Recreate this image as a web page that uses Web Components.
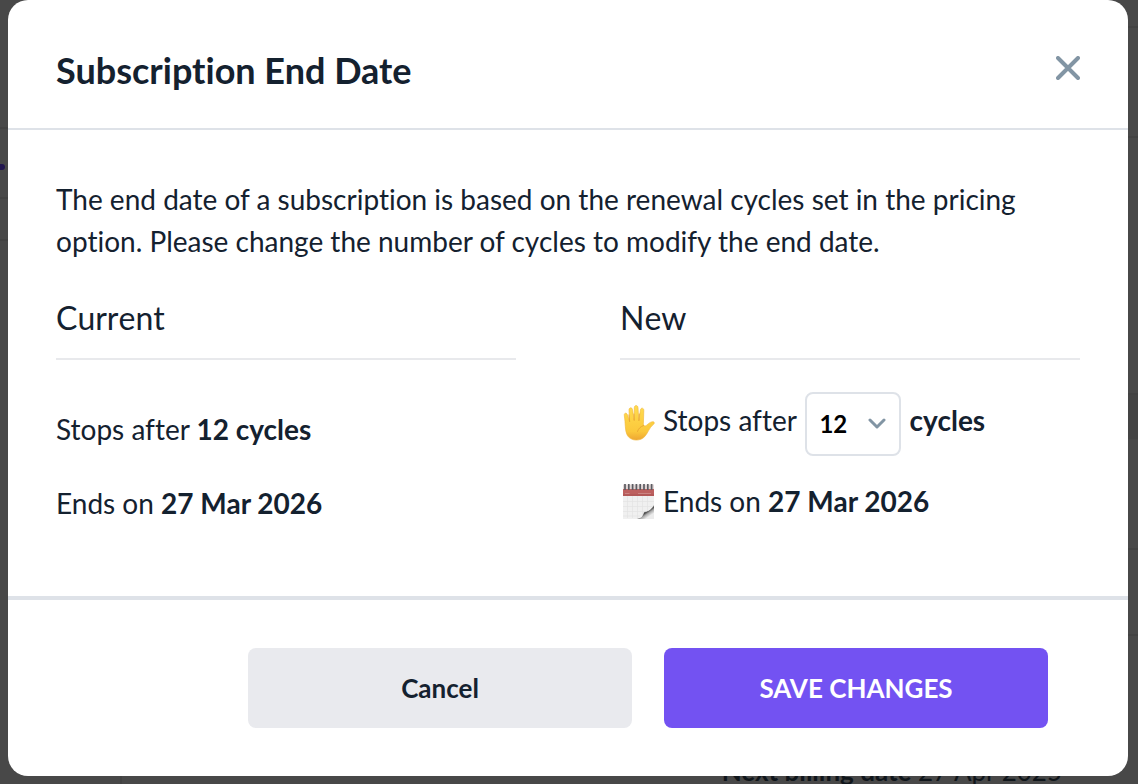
<!DOCTYPE html>
<html lang="en">
<head>
<meta charset="utf-8">
<meta name="viewport" content="width=device-width, initial-scale=1">
<title>Subscription End Date</title>
<style>
  html, body { margin: 0; min-height: 100%; background: #484848; }
  body {
    display: grid;
    min-height: 100vh;
    overflow: hidden;
    font-family: Lato, "Open Sans", sans-serif;
    font-size: 28px;
    line-height: 42px;
    font-variant-ligatures: none;
    color: #14212f;
    --ink: #14212f;
    --line: #dee2e8;
    --muted: #8295a4;
    --brand: #7352f2;
    --brand-text: #fff;
    --neutral: #e9eaee;
  }
  page-behind, modal-dialog { grid-area: 1 / 1; min-width: 0; }
</style>
</head>
<body>
  <page-behind></page-behind>
  <modal-dialog>
    <dialog-header slot="header">Subscription End Date</dialog-header>
    <p slot="intro">The end date of a subscription is based on the renewal cycles set in the pricing option. Please change the number of cycles to modify the end date.</p>
    <term-column slot="columns" heading="Current">
      <term-row>Stops after <b>12 cycles</b></term-row>
      <term-row>Ends on <b>27 Mar 2026</b></term-row>
    </term-column>
    <term-column slot="columns" heading="New" compact>
      <term-row><hand-icon slot="icon"></hand-icon>Stops after <cycle-select></cycle-select> <b>cycles</b></term-row>
      <term-row><calendar-icon slot="icon"></calendar-icon>Ends on <b>27 Mar 2026</b></term-row>
    </term-column>
    <action-button slot="actions">Cancel</action-button>
    <action-button slot="actions" primary>SAVE CHANGES</action-button>
  </modal-dialog>

<script>
const define = (name, html, setup) => {
  const template = document.createElement('template');
  template.innerHTML = html;
  customElements.define(name, class extends HTMLElement {
    constructor() {
      super();
      this.attachShadow({ mode: 'open' }).append(template.content.cloneNode(true));
    }
    connectedCallback() { if (setup) setup(this, this.shadowRoot); }
  });
};

define('page-behind', `
  <style>
    :host { display: grid; grid-template-columns: 8px 1fr 10px; background: #484848; color: #10161b; }
    .edge { display: flex; flex-direction: column; }
    .edge i { border-bottom: 2px solid #424242; }
    .left i:nth-of-type(1) { height: 127px; }
    .left i:nth-of-type(2) { height: 68px; }
    .left i:nth-of-type(3) { height: 40px; }
    .right i:nth-of-type(1) { height: 26px; }
    .right i:nth-of-type(2) { height: 108px; }
    .right i:nth-of-type(3) { height: 255px; }
    .right i:nth-of-type(4) { height: 42px; background: #444; border-color: #444; }
    .right i:nth-of-type(5) { height: 109px; }
    .right i:nth-of-type(6) { height: 84px; }
    .left i:nth-of-type(2)::after {
      content: ""; display: block; width: 5px; height: 6px; margin-top: 35px;
      border-radius: 0 3px 3px 0; background: #22164f;
    }
    .middle { display: flex; flex-direction: column; justify-content: flex-end; margin-left: 112px; border-left: 2px solid #424242; }
    p { margin: 0 66px 0 0; font-size: 26px; line-height: 26px; text-align: right; white-space: nowrap; }
  </style>
  <div class="edge left"><i></i><i></i><i></i></div>
  <div class="middle"><p><b>Next billing date</b> 27 Apr 2025</p></div>
  <div class="edge right"><i></i><i></i><i></i><i></i><i></i><i></i></div>`);

define('modal-dialog', `
  <style>
    :host { display: block; position: relative; margin: 0 10px 8px 8px; align-self: start; }
    section { background: #fff; border-radius: 20px; }
    .body { padding: 48px 48px 72px; }
    .columns { display: grid; grid-template-columns: 1fr 1fr; gap: 104px; margin-top: 34px; }
    footer {
      display: grid; grid-template-columns: 1fr 1fr; gap: 32px;
      padding: 48px 80px 48px 240px; border-top: 4px solid var(--line);
    }
    ::slotted(p) { margin: 0; }
  </style>
  <section role="dialog" aria-label="Subscription End Date">
    <slot name="header"></slot>
    <div class="body">
      <slot name="intro"></slot>
      <div class="columns"><slot name="columns"></slot></div>
    </div>
    <footer><slot name="actions"></slot></footer>
  </section>`);

define('dialog-header', `
  <style>
    :host {
      display: flex; justify-content: space-between; align-items: flex-start;
      padding: 44px 48px 32px; border-bottom: 2px solid var(--line);
    }
    h1 { margin: 0; font-size: 36px; line-height: 52px; font-weight: 700; }
    button { display: block; border: 0; padding: 12px 0; background: none; cursor: pointer; color: var(--muted); }
    svg { display: block; }
  </style>
  <h1><slot></slot></h1>
  <button type="button" aria-label="Close">
    <svg width="24" height="24" viewBox="0 0 24 24" fill="none" stroke="currentColor" stroke-width="4" stroke-linecap="round"><path d="M2 2 22 22M22 2 2 22"/></svg>
  </button>`);

define('term-column', `
  <style>
    :host { display: block; }
    h2 { margin: 0; padding-bottom: 18px; font-size: 32px; line-height: 44px; font-weight: 400; font-kerning: none; border-bottom: 2px solid #e8e9ec; }
    .rows { display: flex; flex-direction: column; gap: 32px; padding-top: 48px; }
    :host([compact]) .rows { gap: 24px; padding-top: 32px; }
  </style>
  <h2></h2>
  <div class="rows"><slot></slot></div>`,
  (host, root) => { root.querySelector('h2').textContent = host.getAttribute('heading'); });

define('term-row', `
  <style>
    :host { display: flex; align-items: center; white-space: nowrap; }
    ::slotted([slot=icon]) { margin-right: 7px; }
  </style>
  <slot name="icon"></slot>
  <div><slot></slot></div>`);

define('cycle-select', `
  <style>
    :host { display: inline-grid; vertical-align: middle; align-items: center; margin: 0 1px 0 2px; }
    select, svg { grid-area: 1 / 1; }
    select {
      appearance: none; box-sizing: border-box; width: 96px; height: 64px; margin: 0;
      padding: 0 0 0 12px; border: 2px solid var(--line); border-radius: 8px;
      background: #fff; color: #000; font: 700 24px/32px Lato, sans-serif;
    }
    svg { justify-self: end; margin-right: 14px; pointer-events: none; }
  </style>
  <select aria-label="Number of cycles">
    <option>6</option><option selected>12</option><option>24</option>
  </select>
  <svg width="20" height="12" viewBox="0 0 20 12" fill="none" stroke="#8295a4" stroke-width="3" stroke-linecap="round" stroke-linejoin="round"><path d="M3 2 10 9 17 2"/></svg>`);

define('action-button', `
  <style>
    :host { display: block; }
    button {
      display: block; width: 100%; height: 80px; padding: 0; border: 0; border-radius: 8px;
      background: var(--neutral); color: var(--ink); font: 700 26px/32px Lato, sans-serif; cursor: pointer;
    }
    :host([primary]) button { background: var(--brand); color: var(--brand-text); }
  </style>
  <button type="button"><slot></slot></button>`);

define('hand-icon', `
  <style>:host, svg { display: block; }</style>
  <svg width="36" height="38" viewBox="0 2 36 38" aria-hidden="true">
    <defs><linearGradient id="g" x1="0" y1="0" x2="0" y2="1"><stop offset="0" stop-color="#ffdc4e"/><stop offset=".75" stop-color="#fbc83c"/><stop offset="1" stop-color="#eea632"/></linearGradient></defs>
    <path d="M4.300 12.500C3.800 9.900 6.600 9.300 7.400 11.700L9.600 18.500 9 7.300C8.800 4.300 12 3.900 12.500 6.700L14.200 17.300 14.300 4.800C14.500 1.700 17.800 1.700 18 4.800L18.900 17.500 20.400 7C20.900 4.300 24 4.700 23.800 7.600L23.400 20.500C23.400 23.500 25.400 23.300 27 21.900 29.200 19.700 32 18.200 33.500 18.800 35 19.500 34.200 20.900 33 21.800 29 25.200 28 30 24.800 33.500 20.400 38.700 10.500 38.200 7.300 32.300 4.700 27.700 5.600 20 4.300 12.500Z" fill="url(#g)" stroke="#f0b638" stroke-width=".6"/>
    <path d="M9.600 18.500 9 12M14.200 17.300 14 11M18.900 17.500 19.300 11M17.500 28.500C18.300 25.600 20.500 23.600 23.600 22.500" fill="none" stroke="#e9a632" stroke-width=".9" stroke-linecap="round"/>
  </svg>`);

define('calendar-icon', `
  <style>:host, svg { display: block; }</style>
  <svg width="36" height="38" viewBox="0 0 36 38" aria-hidden="true">
    <defs><linearGradient id="c" gradientUnits="userSpaceOnUse" x1="22" y1="24" x2="31" y2="37"><stop offset="0" stop-color="#f2f2f2"/><stop offset=".3" stop-color="#ccc"/><stop offset=".48" stop-color="#4c4c4c"/><stop offset=".6" stop-color="#aaa"/><stop offset=".8" stop-color="#ececec"/></linearGradient></defs>
    <path d="M3 5H34V37H3Z" fill="#f0f0f0"/>
    <path d="M3 5H34V14H3Z" fill="#bd605f"/>
    <path d="M3 13H34" stroke="#a95353" stroke-width="1"/>
    <path d="M5 11.500H9.500M18 11.500H31" stroke="#cb8482" stroke-width="1"/>
    <path d="M7.500 14V36M12.500 14V36M17.500 14V36M22.500 14V34M27.500 14V31M3 19.500H34M3 24.500H34M3 29.500H26M3 34H20" stroke="#e2e2e2" stroke-width=".7"/>
    <path d="M17 37C22 36 23 34 24 30 28 30 32 27 34 23V37Z" fill="url(#c)"/>
    <path d="M3 2.500H34V7H3Z" fill="#e0d6d6"/>
    <path d="M5 2V8M8.800 2V8M12.600 2V8M16.400 2V8M20.200 2V8M24 2V8M27.800 2V8M31.600 2V8" stroke="#5c5c62" stroke-width="1.700"/>
  </svg>`);
</script>
</body>
</html>
